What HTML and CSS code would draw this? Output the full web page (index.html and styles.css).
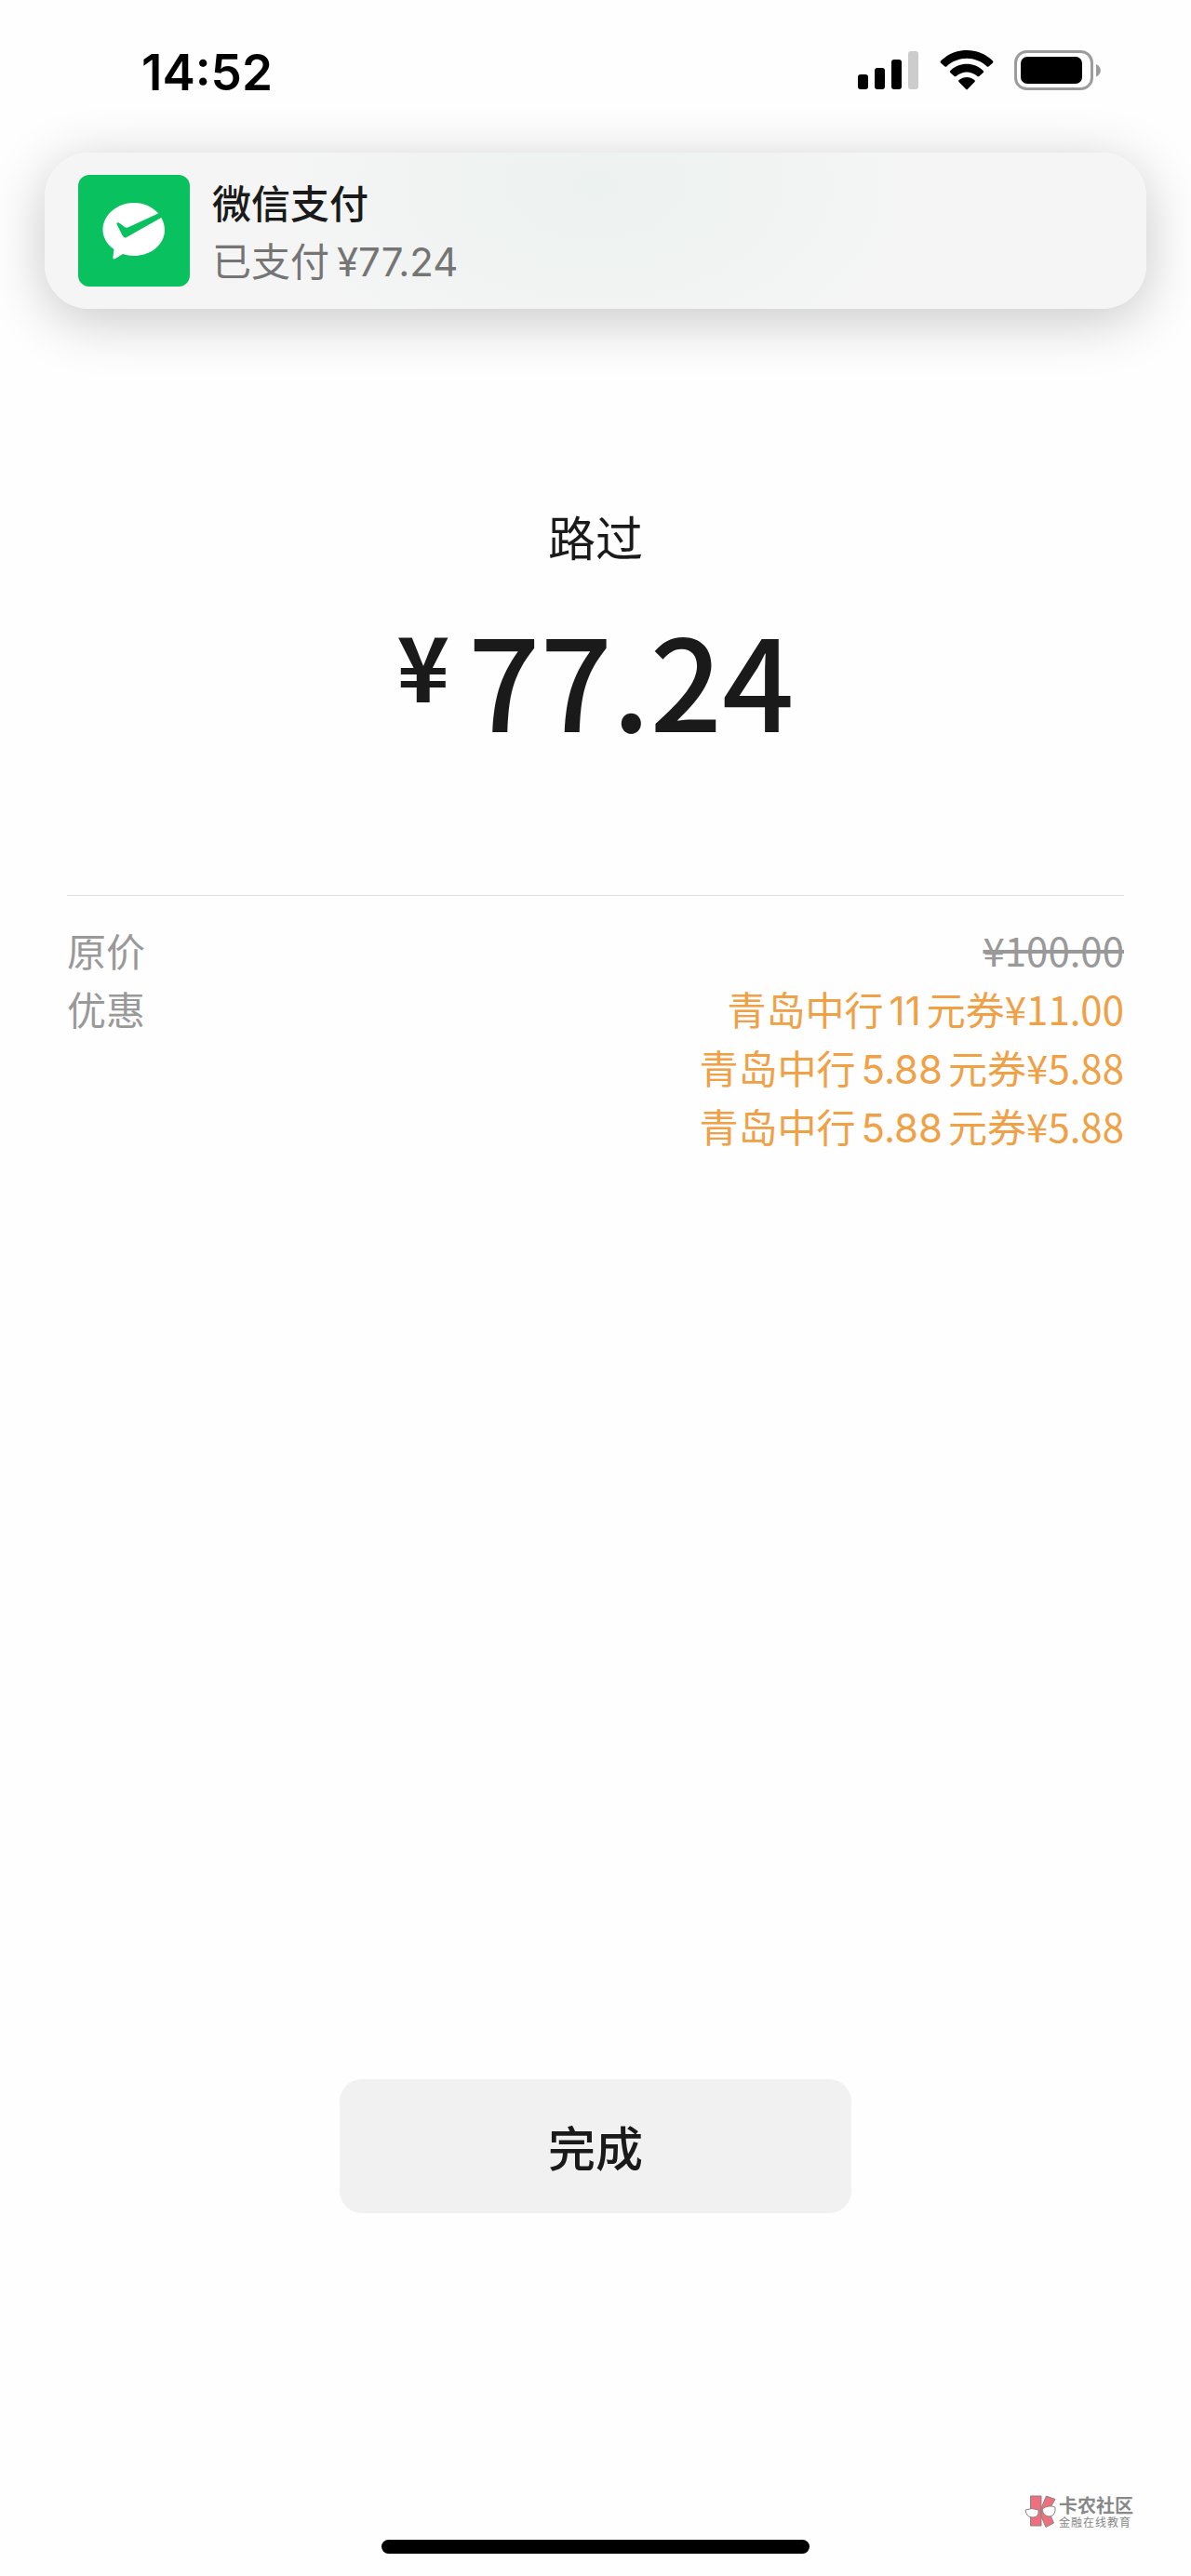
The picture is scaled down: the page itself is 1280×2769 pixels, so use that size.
FILE: index.html
```html
<!DOCTYPE html>
<html lang="zh-CN">
<head>
<meta charset="utf-8">
<meta name="viewport" content="width=device-width, initial-scale=1">
<title>微信支付</title>
<link rel="stylesheet" href="styles.css">
</head>
<body>
<header class="status">
  <time class="clock">14:52</time>
  <div class="indicators">
    <svg width="66" height="44" viewBox="0 0 66 44" aria-hidden="true">
      <rect x="0" y="26" width="11" height="16" rx="3"/>
      <rect x="18" y="19" width="11" height="23" rx="3"/>
      <rect x="36" y="10" width="11" height="32" rx="3"/>
      <rect x="54" y="1" width="11" height="41" rx="3" fill="#ccc"/>
    </svg>
    <svg width="58" height="44" viewBox="0 0 58 44" aria-hidden="true">
      <path d="M1.200 13.800Q0 12.500 1.200 11.200C17-3.600 41-3.600 56.800 11.200Q58 12.500 56.800 13.800L52.500 17.500Q51.600 18.200 50.700 17.400C38 6 20 6 7.300 17.400Q6.400 18.200 5.500 17.500Z"/>
      <path d="M11.200 24Q10.300 23 11.300 22C21.500 12.300 36.500 12.300 46.700 22Q47.700 23 46.800 24L42.300 28Q41.400 28.700 40.500 28C33.500 22 24.500 22 17.500 28Q16.600 28.700 15.700 28Z"/>
      <path d="M20.500 34Q19.500 33 20.700 32.100C25.700 28 32.300 28 37.300 32.100Q38.500 33 37.500 34L30 41.800Q29 42.800 28 41.800Z"/>
    </svg>
    <svg width="94" height="44" viewBox="0 0 94 44" aria-hidden="true">
      <rect x="1.500" y="1.500" width="82" height="40" rx="12" fill="none" stroke="#9c9c9c" stroke-width="3"/>
      <rect x="7" y="7" width="66" height="29" rx="7"/>
      <path d="M88 15C94.500 18 94.500 25.500 88 28.500Z" fill="#9c9c9c"/>
    </svg>
  </div>
</header>

<section class="banner">
  <svg class="app-icon" viewBox="0 0 120 120" aria-hidden="true">
    <rect width="120" height="120" rx="12" fill="#0ac160"/>
    <path fill="#fff" d="M60 30C78 30 93 43 93 59C93 75 78 87 60 87Q54 87 48 85L40 90Q37 91.500 37.500 88L38.500 80C31 75 26.500 67 26.500 59C26.500 43 42 30 60 30Z"/>
    <path fill="#0ac160" d="M87 41L91 45L53 66.500Q49.500 69 47.500 65L41.500 53Q41 50.500 44 51.500L50 56Q52 57.500 54.500 56Z"/>
  </svg>
  <div class="banner-text">
    <h1 class="banner-title">微信支付</h1>
    <p class="banner-note">已支付<span class="figure">¥77.24</span></p>
  </div>
</section>

<main class="receipt">
  <p class="payee">路过</p>
  <p class="amount"><span class="currency">¥</span><span>77.24</span></p>
  <dl class="details">
    <dt>原价</dt>
    <dd><del>¥100.00</del></dd>
    <dt>优惠</dt>
    <dd class="discount">青岛中行<span class="inline-figure">11</span>元券¥11.00</dd>
    <dd class="discount">青岛中行<span class="inline-figure">5.88</span>元券¥5.88</dd>
    <dd class="discount">青岛中行<span class="inline-figure">5.88</span>元券¥5.88</dd>
  </dl>
</main>

<footer class="footer">
  <button class="done" type="button">完成</button>
  <div class="brand">
    <svg width="34" height="36" viewBox="0 0 34 36" aria-hidden="true">
      <g fill="#ee6f7e" stroke="#8c8482" stroke-width="1">
        <path d="M6.500 1H18V33H6.500Z"/>
        <path d="M18 14L23.500 1L33 4.500L26 17L31.500 30L23 34.500L18 23Z"/>
      </g>
      <g fill="#fff" stroke="#8c8482" stroke-width="1">
        <path d="M1 16Q8 13 15 16Q16 24 9 24Q2 24 1 16Z"/>
        <path d="M19 15Q26 10 33 13Q34 22 27 23Q20 23 19 15Z"/>
      </g>
    </svg>
    <div class="brand-text">
      <span class="brand-name">卡农社区</span>
      <span class="brand-tag">金融在线教育</span>
    </div>
  </div>
  <div class="home-bar"></div>
</footer>
</body>
</html>
```
FILE: styles.css
```css
* {
  box-sizing: border-box;
}

body {
  margin: 0;
  min-height: 100vh;
  display: flex;
  flex-direction: column;
  background: #fefefe;
  color: #1a1a1a;
  font-family: "Noto Sans CJK SC", sans-serif;
}

h1, p, dl, dd {
  margin: 0;
}

.status {
  display: flex;
  justify-content: space-between;
  align-items: center;
  padding: 42px 96px 54px 152px;
  color: #000;
}

.clock {
  padding-top: 4px;
  font: 600 53px/64px Inter, sans-serif;
}

.indicators {
  display: flex;
  align-items: center;
  gap: 22px;
}

.banner {
  display: flex;
  align-items: center;
  gap: 24px;
  margin: 0 48px;
  padding: 22px 36px;
  border-radius: 48px;
  background: radial-gradient(ellipse 360px 220px at 50% 20%, #ecf2f0, #f5f5f5);
  box-shadow: 0 12px 60px rgba(0, 0, 0, 0.22);
}

.app-icon {
  width: 120px;
  height: 120px;
}

.banner-title {
  font-size: 42px;
  font-weight: 500;
  line-height: 62px;
}

.banner-note {
  font-size: 42px;
  line-height: 62px;
  color: #757575;
}

.figure {
  margin-left: 8px;
  font-family: Inter, sans-serif;
  line-height: 1;
}

.receipt {
  padding: 208px 72px 0;
}

.payee {
  font-size: 51px;
  line-height: 72px;
  text-align: center;
}

.amount {
  display: flex;
  justify-content: center;
  gap: 20px;
  margin-top: 16px;
  font-size: 136px;
  font-weight: 500;
  line-height: 200px;
}

.currency {
  font-size: 96px;
  font-weight: 700;
  line-height: 172px;
}

.details {
  display: grid;
  grid-template-columns: auto 1fr;
  margin-top: 134px;
  padding-top: 26px;
  border-top: 1px solid #e0e0e0;
  font-size: 42px;
  line-height: 63px;
  color: #999;
}

.details dt {
  grid-column: 1;
}

.details dd {
  grid-column: 2;
  text-align: right;
}

.details .discount {
  color: #f0a045;
}

.inline-figure {
  margin: 0 6px;
  font-family: Inter, sans-serif;
  line-height: 1;
}

.footer {
  display: flex;
  flex-direction: column;
  align-items: center;
  margin-top: auto;
  padding-bottom: 24px;
}

.done {
  width: 43%;
  padding: 36px;
  border: 0;
  border-radius: 24px;
  background: #f1f1f1;
  color: #1a1a1a;
  font: 500 51px/72px "Noto Sans CJK SC", sans-serif;
}

.brand {
  display: flex;
  align-self: flex-end;
  align-items: center;
  gap: 3px;
  margin: 303px 62px 12px 0;
}

.brand-text {
  display: flex;
  flex-direction: column;
  color: #888;
}

.brand-name {
  font-size: 20px;
  font-weight: 700;
  line-height: 22px;
}

.brand-tag {
  font-size: 12px;
  line-height: 14px;
  letter-spacing: 1px;
}

.home-bar {
  width: 36%;
  height: 15px;
  border-radius: 8px;
  background: #000;
}
```
